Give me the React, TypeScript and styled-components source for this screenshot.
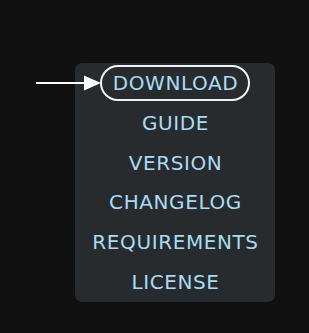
import styled, { createGlobalStyle } from "styled-components";

const GlobalStyle = createGlobalStyle`
  html, body {
    margin: 0;
    padding: 0;
    background-color: #111111;
  }
  body {
    width: 309px;
    height: 333px;
    overflow: hidden;
    font-family: "DejaVu Sans", "Liberation Sans", sans-serif;
  }
`;

const Page = styled.div`
  padding: 63px 0 0 75px;
`;

const Menu = styled.nav`
  position: relative;
  width: 200px;
  height: 239px;
  background-color: #272b2e;
  border-radius: 7px;
  display: flex;
  flex-direction: column;
  align-items: center;
`;

const Item = styled.a<{ active?: boolean }>`
  height: 40px;
  display: flex;
  align-items: center;
  justify-content: center;
  color: #a9dcf4;
  font-size: 20px;
  letter-spacing: 0.6px;
  text-decoration: none;
  white-space: nowrap;
  span {
    box-sizing: border-box;
    height: 36px;
    display: flex;
    align-items: center;
    padding: 0 10px 0 11px;
    border-radius: 18px;
    border: ${(props) => (props.active ? "2px solid #f2f2f2" : "2px solid transparent")};
  }
`;

const Pointer = styled.svg`
  position: absolute;
  left: -40px;
  top: 12px;
`;

const links = ["DOWNLOAD", "GUIDE", "VERSION", "CHANGELOG", "REQUIREMENTS", "LICENSE"];

function App() {
  return (
    <>
      <GlobalStyle />
      <Page>
        <Menu>
          <Pointer width="66" height="16" viewBox="0 0 66 16">
            <line x1="1" y1="8" x2="52" y2="8" stroke="#ffffff" strokeWidth="2" />
            <polygon points="49,0.5 66,8 49,15.5" fill="#ffffff" />
          </Pointer>
          {links.map((link, i) => (
            <Item key={link} href="#" active={i === 0}>
              <span>{link}</span>
            </Item>
          ))}
        </Menu>
      </Page>
    </>
  );
}

export default App;
